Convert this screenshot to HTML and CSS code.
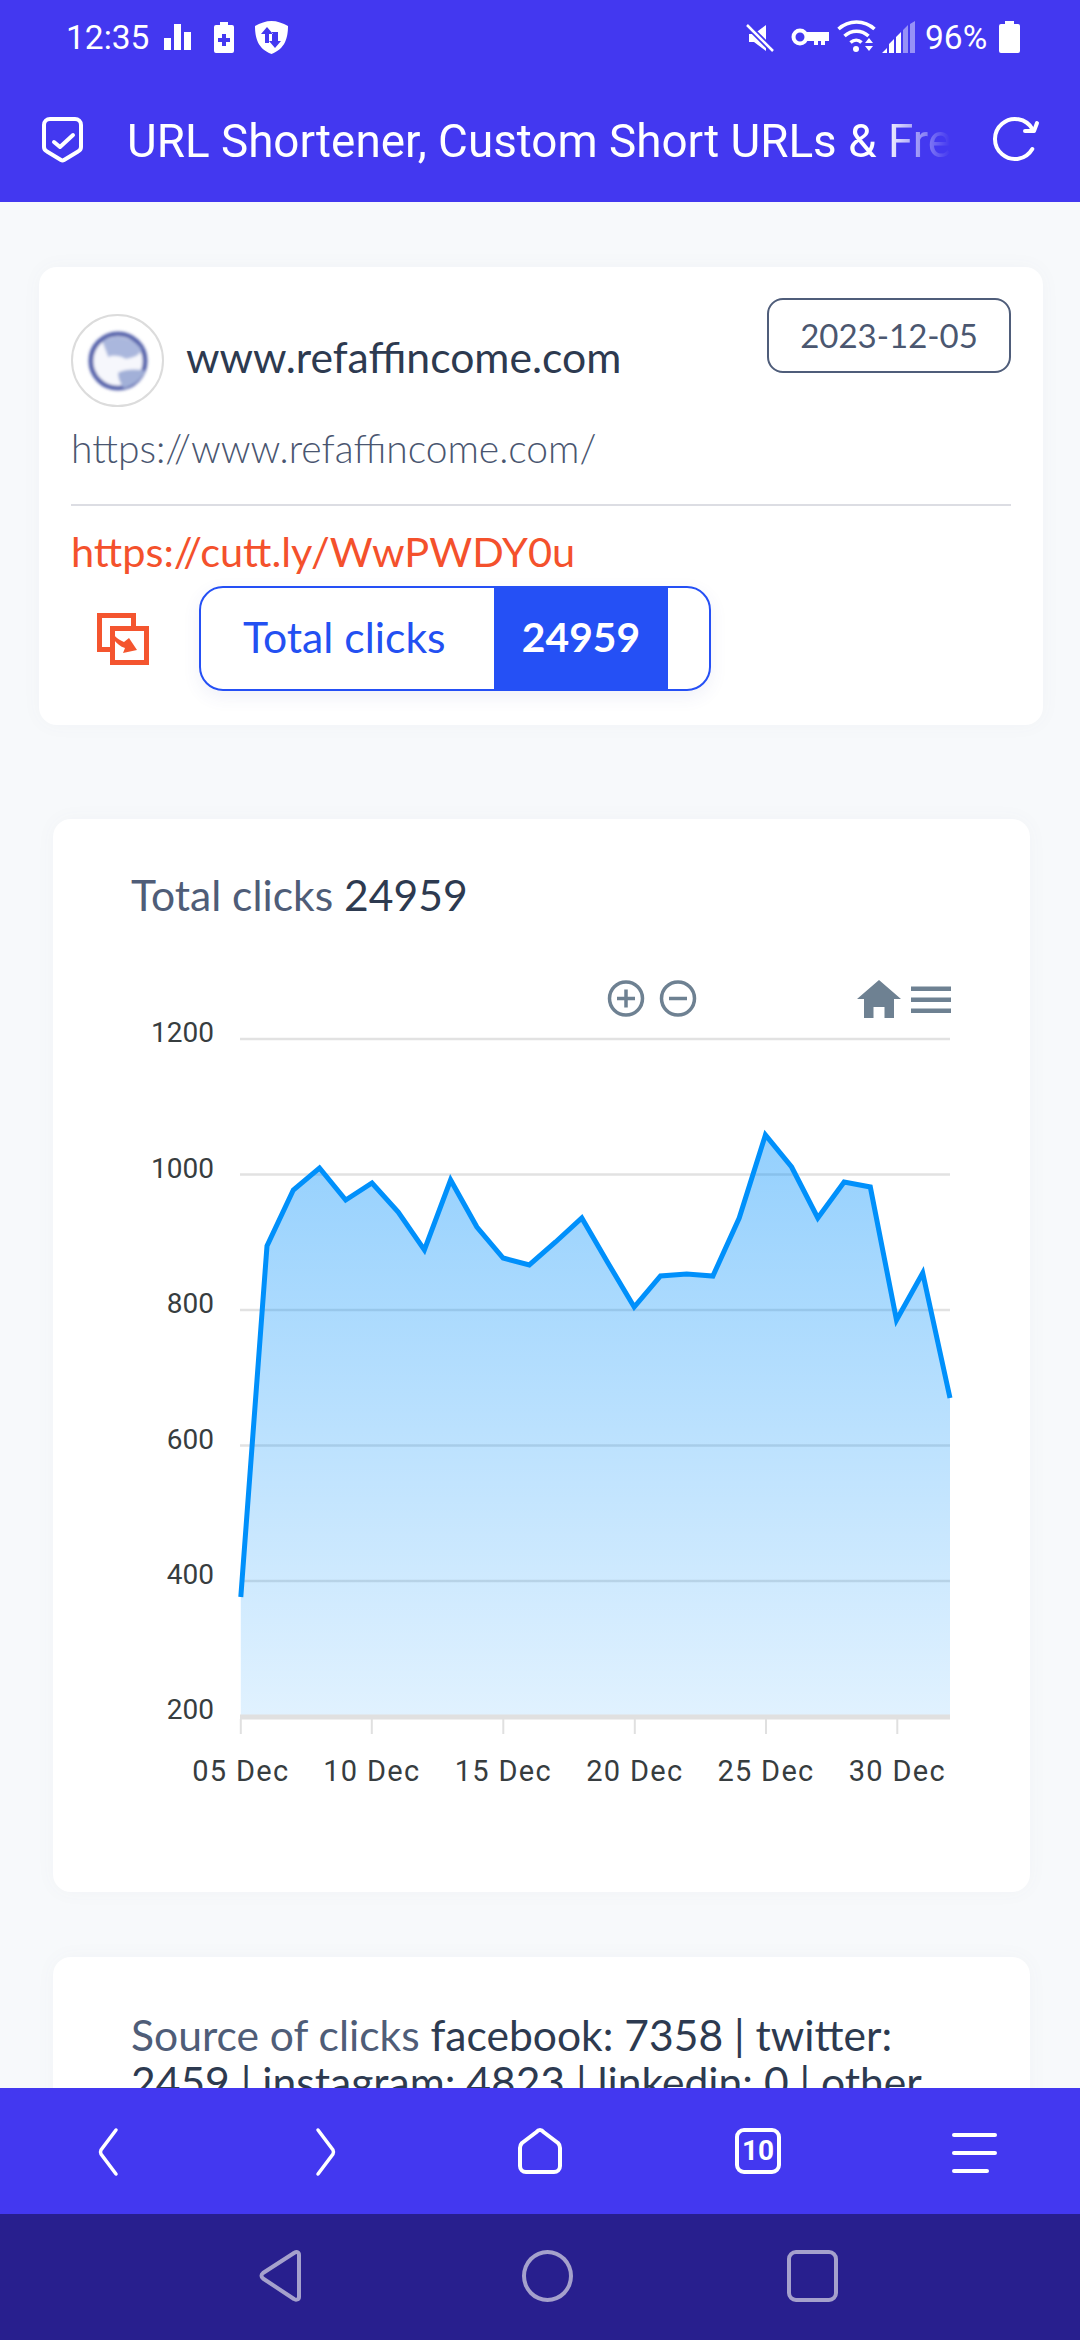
FILE: index.html
```html
<!DOCTYPE html>
<html lang="en">
<head>
<meta charset="utf-8">
<title>URL Shortener</title>
<link rel="stylesheet" href="styles.css">
</head>
<body>
<div class="app">
  <div class="statusbar">
    <div class="status-left">
      <span class="clock">12:35</span>
      <svg class="ic-bars" viewBox="0 0 27 26"><path d="M0 14h7v12H0zM10 0h7v26h-7zM20 8h7v18h-7z" fill="#fff"/></svg>
      <svg class="ic-batplus" viewBox="0 0 20 31"><path fill-rule="evenodd" d="M6 0h8v3h4a2 2 0 0 1 2 2v24a2 2 0 0 1-2 2H2a2 2 0 0 1-2-2V5a2 2 0 0 1 2-2h4zM8 12v4H4v4h4v4h4v-4h4v-4h-4v-4z" fill="#fff"/></svg>
      <svg class="ic-shield" viewBox="0 0 33 33"><path fill-rule="evenodd" d="M16.500 0C22 0 28 2 33 5c0 12-3 23-16.500 28C3 28 0 17 0 5 5 2 11 0 16.500 0zM12 6l-6 7h4v9h4v-9h4zM17 11v9h-3l6 7 6-7h-3v-9z" fill="#fff"/></svg>
    </div>
    <div class="status-right">
      <svg class="ic-mute" viewBox="0 0 28 28"><path d="M3 10h5L20 1v26L8 18H3z" fill="#fff"/><path d="M1 1l26 26" stroke="#4338f0" stroke-width="6"/><path d="M1 1l26 26" stroke="#fff" stroke-width="2.500"/></svg>
      <svg class="ic-key" viewBox="0 0 38 18"><circle cx="9" cy="9" r="6.500" fill="none" stroke="#fff" stroke-width="4"/><path d="M15 4h23v9h-4v4h-4v-4h-3v4h-4v-4h-8z" fill="#fff"/></svg>
      <svg class="ic-wifi" viewBox="0 0 39 32"><g fill="none" stroke="#fff" stroke-width="3.500"><path d="M1.500 9c10-9.500 26-9.500 36 0"/><path d="M7.500 16c7-6.500 17-6.500 24 0"/><path d="M13.500 22.500c3.500-3 8-3 11 0"/></g><circle cx="19" cy="29" r="3" fill="#fff"/><path d="M28 23l4-5 4 5zM28 26l4 5 4-5z" fill="#fff"/></svg>
      <svg class="ic-signal" viewBox="0 0 33 32"><path d="M0 32l5-5v5zM7 32v-9l5-5v14zM14 32V16l5-5v21z" fill="#fff"/><path d="M21 32V9l5-5v28zM28 32V3l5-3v32z" fill="#fff" opacity=".45"/></svg>
      <span class="pct">96%</span>
      <svg class="ic-battery" viewBox="0 0 21 32"><path d="M6 0h9v3h4a2 2 0 0 1 2 2v25a2 2 0 0 1-2 2H2a2 2 0 0 1-2-2V5a2 2 0 0 1 2-2h4z" fill="#fff"/></svg>
    </div>
  </div>

  <header class="appbar">
    <svg class="ic-logo" viewBox="0 0 41 46"><path d="M8 2h25a6 6 0 0 1 6 6v22c0 2-1 3.500-3 4.500L22 43c-1 .6-2 .6-3 0L5 34.500C3 33.500 2 32 2 30V8a6 6 0 0 1 6-6z" fill="none" stroke="#fff" stroke-width="4"/><path d="M12 25l6 5 13-12" fill="none" stroke="#fff" stroke-width="4" stroke-linecap="round" stroke-linejoin="round"/></svg>
    <div class="apptitle">URL Shortener, Custom Short URLs &amp; Free</div>
    <svg class="ic-refresh" viewBox="0 0 44 44"><path d="M39.300 12A20 20 0 1 0 39.300 32" fill="none" stroke="#fff" stroke-width="4" stroke-linecap="round"/><path d="M44 6l-3 8h-9" fill="none" stroke="#fff" stroke-width="4" stroke-linecap="round" stroke-linejoin="round"/></svg>
  </header>

  <main class="content">
    <section class="card link-card">
      <div class="link-head">
        <div class="site">
          <div class="avatar">
            <svg class="globe" viewBox="0 0 64 64">
              <defs><filter id="soft"><feGaussianBlur stdDeviation="1.800"/></filter></defs>
              <g filter="url(#soft)">
                <circle cx="32" cy="32" r="28" fill="#f6f7fc" stroke="#5663ac" stroke-width="5"/>
                <path d="M16 12C28 4 46 6 56 20c-2 8-10 8-16 10-6-4-14-4-18-2-2-6-4-10-6-16z" fill="#aab7dd"/>
                <path d="M32 44c8-4 18-4 28-2-4 10-14 16-22 18-4-6-6-10-6-16z" fill="#a2b0d8"/>
              </g>
            </svg>
          </div>
          <span class="site-name">www.refaffincome.com</span>
        </div>
        <div class="date-pill">2023-12-05</div>
      </div>
      <div class="long-url">https://www.refaffincome.com/</div>
      <hr class="divider">
      <div class="short-url">https://cutt.ly/WwPWDY0u</div>
      <div class="actions">
        <svg class="ic-copy" viewBox="0 0 52 52">
          <rect x="2.500" y="2.500" width="34" height="34" fill="#fff" stroke="#f4552f" stroke-width="5"/>
          <rect x="15.500" y="15.500" width="34" height="34" fill="#fff" stroke="#f4552f" stroke-width="5"/>
          <path d="M13 13c2 9 7 13 14 16l5-4 8 12-14 3 2-5c-9-3-15-11-15-22z" fill="#f4552f"/>
        </svg>
        <div class="clicks-pill">
          <span class="clicks-label">Total clicks</span>
          <span class="clicks-value">24959</span>
        </div>
      </div>
    </section>

    <section class="card chart-card">
      <h2 class="card-title">Total clicks <span class="dark">24959</span></h2>
      <svg class="chart" viewBox="53 960 977 880">
        <defs>
          <linearGradient id="area" x1="0" y1="0" x2="0" y2="1">
            <stop offset="0" stop-color="#008ffb" stop-opacity=".42"/>
            <stop offset="1" stop-color="#008ffb" stop-opacity=".12"/>
          </linearGradient>
        </defs>
        <g stroke="#e2e2e2" stroke-width="2.500">
          <path d="M240 1039H950M240 1174.500H950M240 1310H950M240 1445.500H950M240 1581H950"/>
        </g>
        <path d="M240.800 1597L267 1246 293.300 1190 319.500 1168 345.700 1200 372 1183 398.200 1212 424.400 1250 450.600 1180 476.900 1227 503.100 1258 529.300 1265 555.600 1242 581.800 1218 608 1263 634.200 1307 660.500 1276 686.700 1274 712.900 1276 739.200 1218 765.400 1135 791.600 1167 817.800 1218 844.100 1182 870.300 1187 896.500 1320 922.700 1273 950 1398V1716H240.800z" fill="url(#area)"/>
        <path d="M240.800 1597L267 1246 293.300 1190 319.500 1168 345.700 1200 372 1183 398.200 1212 424.400 1250 450.600 1180 476.900 1227 503.100 1258 529.300 1265 555.600 1242 581.800 1218 608 1263 634.200 1307 660.500 1276 686.700 1274 712.900 1276 739.200 1218 765.400 1135 791.600 1167 817.800 1218 844.100 1182 870.300 1187 896.500 1320 922.700 1273 950 1398" fill="none" stroke="#0090fb" stroke-width="5"/>
        <path d="M240 1717H950" stroke="#e0e0e0" stroke-width="5"/>
        <path d="M240.800 1719v15M371.800 1719v15M503.300 1719v15M634.800 1719v15M766 1719v15M897.300 1719v15" stroke="#e0e0e0" stroke-width="2"/>
        <g text-anchor="end">
          <text x="214" y="1042">1200</text>
          <text x="214" y="1178">1000</text>
          <text x="214" y="1313">800</text>
          <text x="214" y="1449">600</text>
          <text x="214" y="1584">400</text>
          <text x="214" y="1719">200</text>
        </g>
        <g class="xlabels" text-anchor="middle">
          <text x="240.800" y="1781">05 Dec</text>
          <text x="371.800" y="1781">10 Dec</text>
          <text x="503.300" y="1781">15 Dec</text>
          <text x="634.800" y="1781">20 Dec</text>
          <text x="766" y="1781">25 Dec</text>
          <text x="897.300" y="1781">30 Dec</text>
        </g>
        <g fill="none" stroke="#6e8192" stroke-width="3.500">
          <circle cx="626" cy="998.500" r="16.500"/>
          <path d="M617 998.500h18M626 989.500v18"/>
          <circle cx="678" cy="998.500" r="16.500"/>
          <path d="M669 998.500h18"/>
        </g>
        <path d="M857 999l22-19 22 19h-7v19h-9.500v-11h-11v11H864v-19z" fill="#6e8192"/>
        <path d="M911 986.500h40v4.500h-40zM911 997.500h40v4.500h-40zM911 1008.500h40v4.500h-40z" fill="#6e8192"/>
      </svg>
    </section>

    <section class="card source-card">
      <h2 class="card-title">Source of clicks <span class="dark">facebook: 7358 | twitter: 2459 | instagram: 4823 | linkedin: 0 | other</span></h2>
    </section>
  </main>

  <nav class="toolbar">
    <svg class="tb-back" viewBox="0 0 24 48"><path d="M20 2L5 22q-1 2 0 4l15 20" fill="none" stroke="#fff" stroke-width="3.500" stroke-linecap="round"/></svg>
    <svg class="tb-forward" viewBox="0 0 24 48"><path d="M4 2l15 20q1 2 0 4L4 46" fill="none" stroke="#fff" stroke-width="3.500" stroke-linecap="round"/></svg>
    <svg class="tb-home" viewBox="0 0 44 46"><path d="M22 2q2 0 3.500 2L40 15q2 2 2 5v18a6 6 0 0 1-6 6H8a6 6 0 0 1-6-6V20q0-3 2-5L18.500 4Q20 2 22 2z" fill="none" stroke="#fff" stroke-width="4" stroke-linejoin="round"/></svg>
    <div class="tb-tabs">10</div>
    <div class="tb-menu"><span class="bar"></span><span class="bar"></span><span class="bar short"></span></div>
  </nav>

  <nav class="sysnav">
    <svg class="sys-back" viewBox="0 0 44 52"><path d="M40 5c0-3-3-4-5-2L4 23c-2 1.500-2 4 0 5.500L35 49c2 1.500 5 .5 5-2z" fill="none" stroke="#a5a1cc" stroke-width="4" stroke-linejoin="round"/></svg>
    <div class="sys-home"></div>
    <div class="sys-recent"></div>
  </nav>
</div>
</body>
</html>
```
FILE: styles.css
```css
* { box-sizing: border-box; }
html, body { margin: 0; padding: 0; }
body { width: 1080px; height: 2340px; overflow: hidden; font-family: "Lato", "Noto Sans", sans-serif; background: #f7f9fb; }
svg { display: block; flex: none; overflow: visible; }
.app { width: 1080px; height: 2340px; display: flex; flex-direction: column; overflow: hidden; }

.statusbar { height: 68px; flex: none; background: #4338f0; display: flex; justify-content: space-between; align-items: flex-start; padding: 20px 60px 0 66px; color: #fff; font-family: "Roboto", sans-serif; font-size: 33.500px; line-height: 36px; }
.status-left, .status-right { display: flex; align-items: flex-start; }
.clock { width: 98px; }
.ic-bars { width: 27px; height: 26px; margin-top: 4px; }
.ic-batplus { width: 20px; height: 31px; margin: 2px 0 0 23px; }
.ic-shield { width: 33px; height: 33px; margin: 1px 0 0 21px; }
.ic-mute { width: 28px; height: 28px; margin-top: 4px; }
.ic-key { width: 38px; height: 18px; margin: 8px 0 0 17px; }
.ic-wifi { width: 39px; height: 32px; margin-left: 8px; }
.ic-signal { width: 33px; height: 32px; margin: 1px 0 0 6px; }
.pct { margin-left: 10px; width: 74px; }
.ic-battery { width: 21px; height: 32px; margin-top: 1px; }

.appbar { height: 134px; flex: none; background: #4338f0; display: flex; align-items: flex-start; padding: 49px 43px 0 42px; }
.ic-logo { width: 41px; height: 46px; }
.apptitle { width: 823px; margin: -2px 0 0 44px; height: 54px; white-space: nowrap; overflow: hidden; color: #fff; font-family: "Roboto", sans-serif; font-size: 45.800px; line-height: 54px; -webkit-mask-image: linear-gradient(to right, #000 92%, transparent 100%); mask-image: linear-gradient(to right, #000 92%, transparent 100%); }
.ic-refresh { width: 44px; height: 44px; margin-left: 43px; }

.content { flex: 1; min-height: 0; overflow: hidden; padding: 65px 37px 0 39px; display: flex; flex-direction: column; }
.card { background: #fff; border-radius: 18px; box-shadow: 0 0 20px rgba(90, 100, 130, .04); flex: none; }

.link-card { height: 458px; padding: 31px 32px 0 32px; }
.link-head { display: flex; justify-content: space-between; align-items: flex-start; }
.site { display: flex; align-items: center; margin-top: 16px; }
.avatar { width: 93px; height: 93px; border: 2px solid #dcdcdc; border-radius: 50%; display: flex; align-items: center; justify-content: center; }
.globe { width: 62px; height: 62px; }
.site-name { margin-left: 22px; padding-bottom: 8px; font-size: 42.700px; line-height: 46px; color: #2d3a50; }
.date-pill { width: 244px; height: 75px; border: 2px solid #4f5d7a; border-radius: 16px; font-size: 33px; line-height: 71px; text-align: center; color: #4b5770; }
.long-url { margin-top: 18px; font-size: 39px; line-height: 46px; font-weight: 300; color: #4a5670; }
.divider { margin: 33px 0 0; border: 0; height: 2px; background: #dcdde3; }
.short-url { margin-top: 22px; font-size: 41.500px; line-height: 46px; color: #f4512c; }
.actions { display: flex; align-items: center; margin-top: 12px; padding-left: 26px; }
.ic-copy { width: 52px; height: 52px; }
.clicks-pill { margin-left: 50px; width: 512px; height: 105px; border: 2px solid #2550f5; border-radius: 24px; display: flex; align-items: stretch; box-shadow: 0 6px 18px rgba(60, 80, 160, .08); }
.clicks-label { width: 293px; padding-left: 42px; font-size: 42.700px; line-height: 98px; color: #2350f2; }
.clicks-value { width: 174px; margin: -2px 0; background: #2550f5; color: #fff; font-weight: 700; font-size: 40.800px; line-height: 102px; text-align: center; }

.chart-card { height: 1073px; margin: 94px 13px 0 14px; padding: 52px 0 0 0; }
.card-title { margin: 0 0 0 78px; font-size: 42.600px; line-height: 47px; font-weight: 400; color: #4f5d78; }
.dark { color: #2d3a50; }
.chart { width: 977px; height: 880px; margin-top: 42px; }
.chart text { font-family: "Roboto", sans-serif; font-size: 28px; fill: #373d3f; }
.chart .xlabels text { font-size: 29px; letter-spacing: 1.300px; }

.source-card { height: 400px; margin: 65px 13px 0 14px; padding: 54px 60px 0 0; }

.toolbar { height: 126px; flex: none; background: #4338f0; display: flex; align-items: flex-start; padding: 40px 0 0 96px; position: relative; }
.tb-back { width: 24px; height: 48px; }
.tb-forward { width: 24px; height: 48px; margin-left: 194px; }
.tb-home { width: 44px; height: 46px; margin-left: 180px; }
.tb-tabs { width: 46px; height: 46px; margin-left: 173px; border: 4px solid #fff; border-radius: 9px; color: #fff; font-family: "Roboto", sans-serif; font-weight: 700; font-size: 28px; line-height: 38px; text-align: center; }
.tb-menu { width: 45px; margin: 5px 0 0 171px; display: flex; flex-direction: column; gap: 14px; }
.bar { display: block; height: 4px; border-radius: 2px; background: #fff; }
.bar.short { width: 37px; }

.sysnav { height: 126px; flex: none; background: #281f8e; display: flex; align-items: flex-start; padding: 36px 0 0 259px; }
.sys-back { width: 44px; height: 52px; }
.sys-home { width: 51px; height: 52px; margin-left: 219px; border: 4px solid #a5a1cc; border-radius: 50%; }
.sys-recent { width: 51px; height: 52px; margin-left: 214px; border: 4px solid #a5a1cc; border-radius: 9px; }
```
